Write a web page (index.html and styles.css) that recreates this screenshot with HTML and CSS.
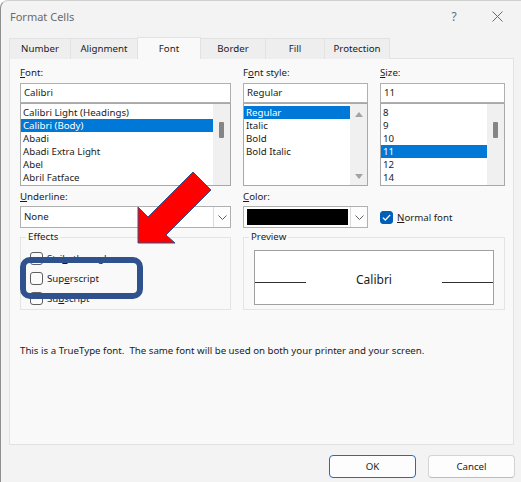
FILE: index.html
```html
<!DOCTYPE html>
<html>

<head>
  <meta charset="utf-8">
  <title>Format Cells</title>
  <link rel="stylesheet" href="styles.css">
</head>

<body>
  <div class="window">
    <div class="titlebar">
      <span class="title">Format Cells</span>
      <span class="help">?</span>
      <span class="close">
        <svg width="11" height="11" viewBox="0 0 11 11"><path d="M0.5 0.5 L10.5 10.5 M10.5 0.5 L0.5 10.5" stroke="#6b6b6b" stroke-width="1" fill="none"/></svg>
      </span>
    </div>

    <div class="tabs">
      <div class="tab">Number</div>
      <div class="tab tab-alignment">Alignment</div>
      <div class="tab active">Font</div>
      <div class="tab tab-border">Border</div>
      <div class="tab tab-fill">Fill</div>
      <div class="tab tab-protection">Protection</div>
    </div>

    <div class="panel">
      <div class="font-grid">
        <div class="label"><u>F</u>ont:</div>
        <div class="label">F<u>o</u>nt style:</div>
        <div class="label"><u>S</u>ize:</div>

        <div class="input">Calibri</div>
        <div class="input">Regular</div>
        <div class="input">11</div>

        <div class="listbox">
          <ul class="items">
            <li>Calibri Light (Headings)</li>
            <li class="selected">Calibri (Body)</li>
            <li>Abadi</li>
            <li>Abadi Extra Light</li>
            <li>Abel</li>
            <li>Abril Fatface</li>
          </ul>
          <div class="scrollbar"><div class="thumb"></div></div>
        </div>
        <div class="listbox">
          <ul class="items">
            <li class="selected">Regular</li>
            <li>Italic</li>
            <li>Bold</li>
            <li>Bold Italic</li>
          </ul>
          <div class="scrollbar arrows"><i class="tri-up"></i><i class="tri-down"></i></div>
        </div>
        <div class="listbox">
          <ul class="items">
            <li>8</li>
            <li>9</li>
            <li>10</li>
            <li class="selected">11</li>
            <li>12</li>
            <li>14</li>
          </ul>
          <div class="scrollbar"><div class="thumb"></div></div>
        </div>

        <div class="label second"><u>U</u>nderline:</div>
        <div class="label second"><u>C</u>olor:</div>
        <div class="label second"></div>

        <div class="select">
          <span class="select-value">None</span>
          <span class="select-btn"><svg width="9" height="5" viewBox="0 0 9 5"><path d="M0.5 0.5 L4.5 4.5 L8.5 0.5" stroke="#606060" fill="none"/></svg></span>
        </div>
        <div class="select">
          <span class="select-value"><span class="swatch"></span></span>
          <span class="select-btn"><svg width="9" height="5" viewBox="0 0 9 5"><path d="M0.5 0.5 L4.5 4.5 L8.5 0.5" stroke="#606060" fill="none"/></svg></span>
        </div>
        <div class="check-row">
          <span class="checkbox checked"><svg width="9" height="7" viewBox="0 0 9 7"><path d="M0.8 3.6 L3.3 6 L8.2 0.9" stroke="#fff" stroke-width="1.3" fill="none"/></svg></span>
          <span><u>N</u>ormal font</span>
        </div>

        <fieldset class="group">
          <legend>Effects</legend>
          <div class="effects">
            <div class="check-row"><span class="checkbox"></span><span>Stri<u>k</u>ethrough</span></div>
            <div class="check-row"><span class="checkbox"></span><span>Sup<u>e</u>rscript</span></div>
            <div class="check-row"><span class="checkbox"></span><span>Su<u>b</u>script</span></div>
          </div>
        </fieldset>
        <fieldset class="group preview">
          <legend>Preview</legend>
          <div class="preview-box">
            <span class="rule"></span>
            <span class="sample">Calibri</span>
            <span class="rule"></span>
          </div>
        </fieldset>
      </div>

      <p class="note">This is a TrueType font.&nbsp; The same font will be used on both your printer and your screen.</p>
    </div>

    <div class="buttons">
      <button class="btn default">OK</button>
      <button class="btn">Cancel</button>
    </div>

    <!-- annotation drawn over the dialog -->
    <svg class="annotation" width="521" height="482" viewBox="0 0 521 482">
      <polygon points="138,243 138,207 148,217 193,172 211,190 166,235 175,243" fill="#ff0000" stroke="#2f528f" stroke-width="1"/>
      <rect x="23" y="260" width="117" height="36" rx="7" fill="none" stroke="#2f528f" stroke-width="6"/>
    </svg>
  </div>
</body>

</html>
```

FILE: styles.css
```css
* {
  margin: 0;
  padding: 0;
  box-sizing: border-box;
}

body {
  background-color: #ffffff;
  font-family: "Noto Sans", "Open Sans", sans-serif;
  font-size: 9.7px;
  color: #1b1b1b;
}

.window {
  position: relative;
  width: 521px;
  height: 482px;
  display: flex;
  flex-direction: column;
  background-color: #f3f3f3;
  border-left: 1px solid #8f8f8f;
  border-top: 1px solid #cfcfcf;
  border-top-left-radius: 8px;
  overflow: hidden;
}

.titlebar {
  height: 31px;
  display: flex;
  align-items: center;
  padding: 0 0 1px 9px;
}

.title {
  font-size: 11px;
  color: #6b6b6b;
}

.help {
  margin-left: auto;
  width: 46px;
  text-align: center;
  font-size: 12px;
  color: #6b6b6b;
}

.close {
  width: 40px;
  margin-right: 4px;
  display: flex;
  justify-content: center;
}

.tabs {
  display: flex;
  height: 21px;
  margin-top: 6px;
  padding-left: 8px;
  position: relative;
  z-index: 1;
}

.tab {
  width: 62px;
  padding-bottom: 1px;
  display: flex;
  align-items: center;
  justify-content: center;
  white-space: nowrap;
  background-color: #eeeeee;
  border: 1px solid #e2e2e2;
  border-bottom: none;
  margin-right: -1px;
}

.tab.active {
  width: 64px;
  height: 22px;
  margin-top: -1px;
  background-color: #f9f9f9;
}

.tab-alignment {
  width: 68px;
}

.tab-border {
  width: 66px;
}

.tab-fill {
  width: 60px;
}

.tab-protection {
  width: 66px;
}

.panel {
  height: 387px;
  margin: -1px 7px 0 8px;
  padding: 7px 0 0 10px;
  background-color: #f9f9f9;
  border: 1px solid #e2e2e2;
}

.font-grid {
  display: grid;
  grid-template-columns: 211px 125px 125px;
  column-gap: 12px;
}

.label {
  height: 14px;
  line-height: 14px;
}

.label.second {
  margin-top: 4px;
}

.input {
  height: 20px;
  margin-top: 3px;
  padding-left: 3px;
  line-height: 18px;
  background-color: #ffffff;
  border: 1px solid #b0b0b0;
}

.listbox {
  height: 83px;
  display: flex;
  background-color: #ffffff;
  border: 1px solid #a8a8a8;
  overflow: hidden;
}

.items {
  flex: 1;
  list-style: none;
  padding-top: 2px;
}

.items li {
  height: 13px;
  line-height: 13px;
  padding-left: 2px;
  white-space: nowrap;
}

.items li.selected {
  background-color: #0078d7;
  color: #ffffff;
}

.scrollbar {
  width: 17px;
  background-color: #f0f0f0;
  padding-top: 18px;
  display: flex;
  flex-direction: column;
  align-items: center;
}

.thumb {
  width: 5px;
  height: 16px;
  border-radius: 1px;
  background-color: #858585;
}

.scrollbar.arrows {
  padding: 8px 0 6px;
  justify-content: space-between;
}

.tri-up {
  border-left: 4px solid transparent;
  border-right: 4px solid transparent;
  border-bottom: 5px solid #a3a3a3;
}

.tri-down {
  border-left: 4px solid transparent;
  border-right: 4px solid transparent;
  border-top: 5px solid #a3a3a3;
}

.select {
  height: 22px;
  margin-top: 2px;
  display: flex;
  background-color: #ffffff;
  border: 1px solid #b0b0b0;
}

.select-value {
  flex: 1;
  padding: 2px;
  padding-left: 3px;
  line-height: 16px;
  display: flex;
}

.swatch {
  flex: 1;
  background-color: #000000;
}

.select-btn {
  width: 17px;
  display: flex;
  align-items: center;
  justify-content: center;
  background-color: #fdfdfd;
  border-left: 1px solid #dadada;
}

.check-row {
  display: flex;
  align-items: center;
  gap: 4px;
  height: 20px;
}

.font-grid > .check-row {
  margin-top: 2px;
  height: 22px;
}

.checkbox {
  width: 13px;
  height: 13px;
  border: 1px solid #5f5f5f;
  border-radius: 3px;
  background-color: #fbfbfb;
  display: flex;
  align-items: center;
  justify-content: center;
}

.checkbox.checked {
  background-color: #005fb8;
  border-color: #005fb8;
}

.group {
  height: 80px;
  margin-top: 2px;
  border: 1px solid #e4e4e4;
}

.group legend {
  margin-left: 5px;
  padding: 0 2px;
  line-height: 14px;
}

.preview {
  grid-column: span 2;
}

.effects {
  padding: 4px 0 0 9px;
}

.preview-box {
  height: 55px;
  margin: 6px 10px 0;
  display: flex;
  align-items: center;
  justify-content: space-between;
  background-color: #ffffff;
  border: 1px solid #a0a0a0;
}

.rule {
  width: 51px;
  height: 1px;
  margin-top: 9px;
  background-color: #303030;
}

.sample {
  font-size: 12px;
  margin-top: 4px;
}

.note {
  margin-top: 34px;
  line-height: 14px;
}

.buttons {
  display: flex;
  justify-content: flex-end;
  gap: 12px;
  padding: 10px 6px 0 0;
}

.btn {
  width: 87px;
  height: 23px;
  font-family: inherit;
  font-size: inherit;
  color: #1b1b1b;
  background-color: #fdfdfd;
  border: 1px solid #d3d3d3;
  border-bottom-color: #bdbdbd;
  border-radius: 4px;
}

.btn.default {
  border-color: #1c6fc0;
}

.annotation {
  position: absolute;
  left: -1px;
  top: -1px;
  pointer-events: none;
}
```
